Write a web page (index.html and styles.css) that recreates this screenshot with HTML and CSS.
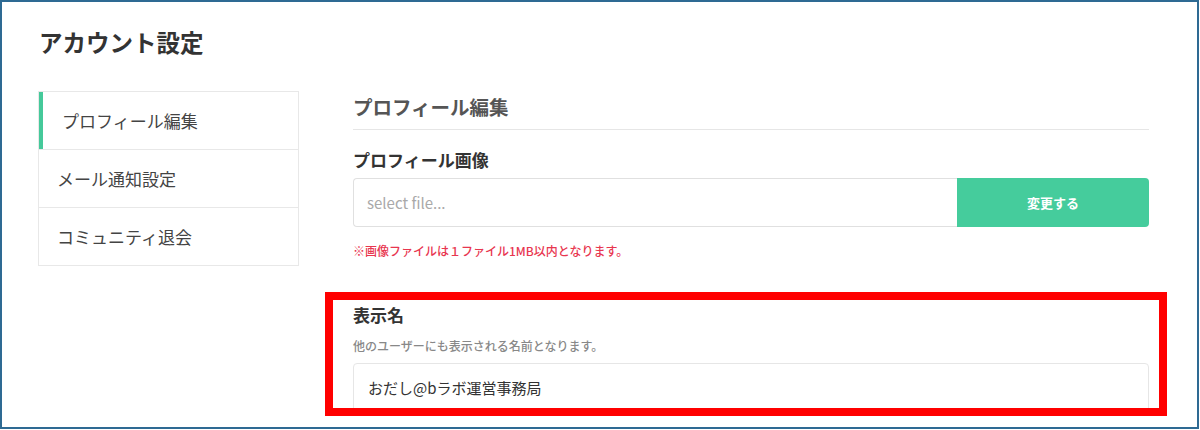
FILE: index.html
```html
<!DOCTYPE html>
<html lang="ja">
<head>
<meta charset="utf-8">
<title>アカウント設定</title>
<link rel="stylesheet" href="styles.css">
</head>
<body>
<div class="frame">
  <h1 class="page-title">アカウント設定</h1>
  <div class="layout">
    <nav class="sidebar">
      <div class="nav-item active">プロフィール編集</div>
      <div class="nav-item">メール通知設定</div>
      <div class="nav-item">コミュニティ退会</div>
    </nav>
    <main class="main">
      <h2 class="section-title">プロフィール編集</h2>
      <div class="field-label">プロフィール画像</div>
      <div class="file-row">
        <input class="file-input" type="text" placeholder="select file...">
        <button class="file-button" type="button">変更する</button>
      </div>
      <div class="note">※画像ファイルは１ファイル1MB以内となります。</div>
      <div class="field-label field-label-name">表示名</div>
      <div class="help">他のユーザーにも表示される名前となります。</div>
      <input class="text-input" type="text" value="おだし@bラボ運営事務局">
    </main>
  </div>
  <div class="highlight"></div>
</div>
</body>
</html>
```
FILE: styles.css
```css
html, body {
  margin: 0;
  padding: 0;
  background: #fff;
}
body {
  width: 1200px;
  height: 430px;
  overflow: hidden;
  font-family: "Noto Sans CJK JP", "Noto Sans", sans-serif;
  color: #333;
}
.frame {
  position: relative;
  box-sizing: border-box;
  width: 1199px;
  height: 429px;
  border: 2px solid #2e6a93;
  background: #fff;
  padding: 25px 0 0 36px;
  overflow: hidden;
}
.page-title {
  margin: 0 0 0 1px;
  font-size: 23.5px;
  line-height: 31px;
  font-weight: 700;
  color: #333;
}
.layout {
  display: flex;
  margin-top: 33px;
  align-items: flex-start;
}
.sidebar {
  width: 261px;
  box-sizing: border-box;
  border: 1px solid #e8e8e8;
  flex: none;
}
.nav-item {
  height: 57px;
  display: flex;
  align-items: center;
  padding-left: 18px;
  font-size: 17px;
  color: #444;
}
.nav-item + .nav-item {
  border-top: 1px solid #e8e8e8;
}
.nav-item.active {
  box-shadow: inset 4px 0 0 #45c99a;
  padding-left: 23px;
}
.main {
  margin-left: 54px;
  width: 796px;
  flex: none;
}
.section-title {
  margin: 0;
  padding: 3px 0 9px;
  font-size: 19.5px;
  line-height: 26px;
  font-weight: 700;
  color: #555;
  border-bottom: 1px solid #e6e6e6;
}
.field-label {
  margin-top: 18px;
  font-size: 17px;
  line-height: 24px;
  font-weight: 700;
  color: #333;
}
.file-row {
  display: flex;
  margin-top: 6px;
  height: 49px;
}
.file-input {
  flex: 1;
  box-sizing: border-box;
  height: 49px;
  margin: 0;
  border: 1px solid #e0e0e0;
  border-right: none;
  border-radius: 4px 0 0 4px;
  padding: 0 0 0 13px;
  font-family: inherit;
  font-size: 15px;
  color: #333;
  background: #fff;
  outline: none;
}
.file-input::placeholder {
  color: #a9a9a9;
}
.file-button {
  width: 192px;
  height: 49px;
  margin: 0;
  border: none;
  border-radius: 0 4px 4px 0;
  background: #45cc9c;
  color: #fff;
  font-family: inherit;
  font-size: 13px;
  font-weight: 700;
  padding: 0;
}
.note {
  margin-top: 15px;
  font-size: 12px;
  line-height: 18px;
  font-weight: 500;
  color: #e8364f;
}
.field-label-name {
  margin-top: 43px;
}
.help {
  margin-top: 10px;
  font-size: 12px;
  line-height: 18px;
  font-weight: 500;
  color: #888;
}
.text-input {
  display: block;
  box-sizing: border-box;
  width: 100%;
  height: 49px;
  margin: 8px 0 0;
  border: 1px solid #e6e6e6;
  border-radius: 4px;
  padding: 0 0 0 14px;
  font-family: inherit;
  font-size: 15px;
  color: #333;
  background: #fff;
  outline: none;
}
.highlight {
  position: absolute;
  left: 323px;
  top: 290px;
  width: 842px;
  height: 124px;
  box-sizing: border-box;
  border: 8px solid #ff0000;
  pointer-events: none;
}
```
